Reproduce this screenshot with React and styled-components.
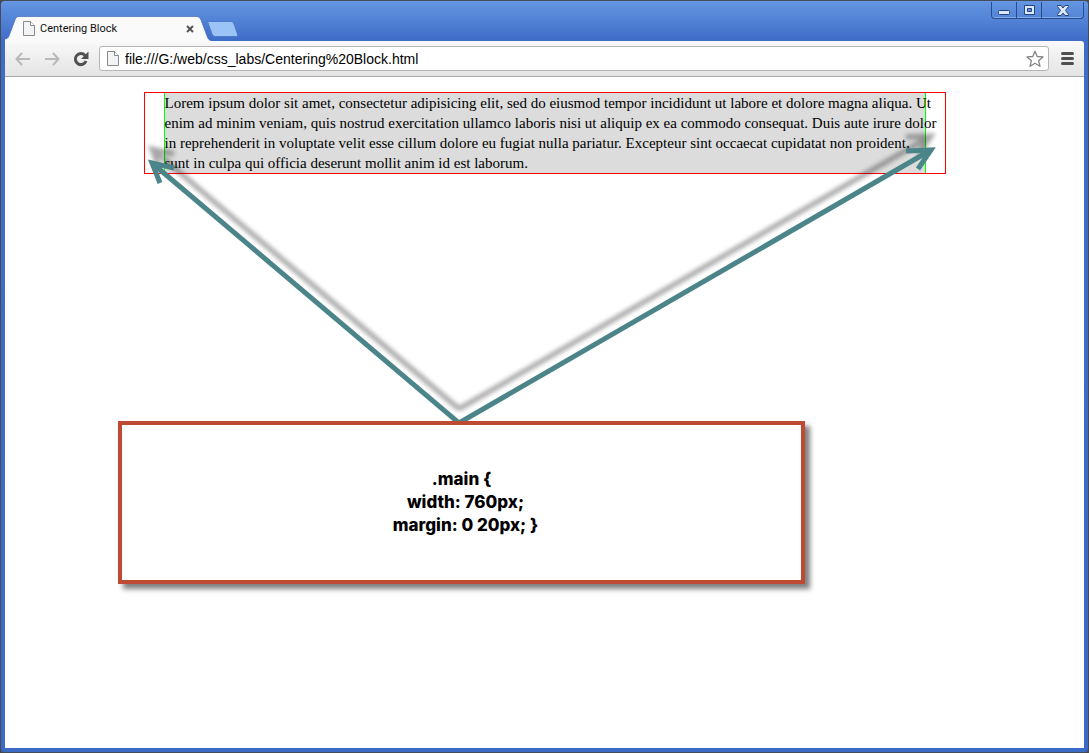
import React from "react";
import styled, { createGlobalStyle } from "styled-components";

const Global = createGlobalStyle`
  *, *::before, *::after { box-sizing: border-box; }
  html, body, #root { height: 100%; }
  body { margin: 0; background: #484848; }
  button { margin: 0; padding: 0; border: 0; background: none; font: inherit; color: inherit; }
`;

const Window = styled.div`
  display: flex;
  flex-direction: column;
  min-height: 100%;
  padding: 1px 4px 4px;
  border: 1px solid #444b59;
  border-radius: 4px;
  background: linear-gradient(#6496e2, #3f6cc8 40px, #3b6bc6);
`;

const TitleBar = styled.header`
  display: flex;
  align-items: flex-end;
  justify-content: space-between;
  height: 39px;
`;

const Tabs = styled.nav`
  display: flex;
  align-items: flex-end;
`;

const Tab = styled.div`
  position: relative;
  display: flex;
  align-items: center;
  gap: 5px;
  width: 202px;
  height: 25px;
  padding: 0 11px 0 18px;
  font: 11px/24px Roboto, "Open Sans", sans-serif;
  color: #111;
`;

const TabShape = styled.svg`
  position: absolute;
  left: 0;
  top: 0;
`;

const TabTitle = styled.span`
  position: relative;
  flex: 1;
  white-space: nowrap;
`;

const IconButton = styled.button`
  position: relative;
  display: flex;
  flex: none;
  align-items: center;
  justify-content: center;
  width: ${(p) => p.$width}px;
  height: ${(p) => p.$height}px;
`;

const PageGlyph = styled.svg`
  position: relative;
  flex: none;
  display: block;
`;

const NewTab = styled.button`
  height: 20px;
`;

const WindowButtons = styled.div`
  display: flex;
  align-self: flex-start;
  height: 17px;
  border: 1px solid #294b90;
  border-top: 0;
  border-radius: 0 0 4px 4px;
  box-shadow: inset 0 -1px #80aae9;
`;

const WindowButton = styled(IconButton)`
  & + & { border-left: 1px solid #294b90; }
`;

const Toolbar = styled.div`
  display: flex;
  align-items: center;
  height: 36px;
  padding: 0 9px 0 8px;
  border-bottom: 1px solid #a9a9a9;
  border-radius: 0 3px 0 0;
  background: linear-gradient(#f9f9f9, #e4e4e4);
`;

const AddressBar = styled.form`
  display: flex;
  flex: 1;
  align-items: center;
  gap: 6px;
  height: 25px;
  min-width: 0;
  margin: 0 10px 0 8px;
  padding: 0 4px 0 7px;
  border: 1px solid #b5b5b5;
  border-radius: 3px;
  background: #fff;
`;

const AddressInput = styled.input`
  flex: 1;
  min-width: 0;
  padding: 0;
  border: 0;
  outline: 0;
  background: none;
  font: 14px/20px "Liberation Sans", Arial, sans-serif;
  color: #000;
`;

const Page = styled.main`
  position: relative;
  flex: 1;
  padding: 15px 0 24px;
  background: #fff;
`;

const Wrapper = styled.div`
  max-width: 802px;
  margin: 0 auto;
  border: 1px solid #f00;
`;

const Main = styled.p`
  max-width: 762px;
  margin: 0 auto;
  border: solid #0f0;
  border-width: 0 1px;
  background: #dcdcdc;
  font: 15px/20px "Liberation Serif", "Times New Roman", serif;
  white-space: nowrap;
  color: #000;
`;

const Arrows = styled.svg`
  position: absolute;
  left: 0;
  top: 0;
  pointer-events: none;
`;

const Callout = styled.pre`
  display: flex;
  flex-direction: column;
  align-items: center;
  justify-content: center;
  max-width: 687px;
  min-height: 163px;
  margin: 247px 24px 0 113px;
  border: 4px solid #bf4a34;
  background: #fff;
  box-shadow: 5px 5px 5px rgba(0, 0, 0, 0.5);
  font: 800 17px/23px Inter, "Arial Black", sans-serif;
  color: #000;
`;

const Declaration = styled.code`
  padding-left: ${(p) => (p.$indent ? 8 : 0)}px;
  font: inherit;
`;

function DocumentIcon() {
  return (
    <PageGlyph width="12" height="15" viewBox="0 0 12 15" aria-hidden="true">
      <path d="M.5 .5h7l4 4v10H.5z" fill="#f1f3f5" stroke="#8b8b8b" />
      <path d="M7.500 .5v4h4" fill="#fff" stroke="#8b8b8b" />
    </PageGlyph>
  );
}

function Arrow({ d, head }) {
  return (
    <g>
      <path d={d} />
      <path d={head} />
    </g>
  );
}

function ArrowPair() {
  return (
    <>
      <Arrow d="M454 346L147 86" head="M169 91L147 86L155 106" />
      <Arrow d="M454 346L926 73" head="M901 74L926 73L913 92" />
    </>
  );
}

export default function App() {
  return (
    <>
      <Global />
      <Window>
        <TitleBar>
          <Tabs aria-label="Tabs">
            <Tab>
              <TabShape width="206" height="25" aria-hidden="true">
                <path
                  d="M0 25V23C2 23 3 22 4 20L10 4C11 1 12 .5 14 .5H191C194 .5 195 2 196 4L202 20C203 23 204 24 206 25Z"
                  fill="#fafafa"
                />
                <path
                  d="M0 23C2 23 3 22 4 20L10 4C11 1 12 .5 14 .5H191C194 .5 195 2 196 4L202 20C203 23 204 24 206 24"
                  fill="none"
                  stroke="#3a61ad"
                  strokeOpacity=".6"
                />
              </TabShape>
              <DocumentIcon />
              <TabTitle>Centering Block</TabTitle>
              <IconButton type="button" aria-label="Close tab" $width={12} $height={14}>
                <svg width="8" height="8" viewBox="0 0 8 8">
                  <path d="M1 1l6 6M7 1l-6 6" stroke="#555" strokeWidth="2" />
                </svg>
              </IconButton>
            </Tab>
            <NewTab type="button" aria-label="New tab">
              <svg width="32" height="16" viewBox="0 0 32 16">
                <path
                  d="M1.500 .5H24C26 .5 26 1 27 3L30.500 13C31 15 30 15.500 29 15.500H9C7 15.500 6 15 5 13L1 2C.7 1 .8 .5 1.500 .5Z"
                  fill="#9cc3f5"
                  stroke="#4b7acb"
                />
              </svg>
            </NewTab>
          </Tabs>
          <WindowButtons>
            <WindowButton type="button" aria-label="Minimize" $width={24} $height={16}>
              <svg width="12" height="10" viewBox="0 0 12 10">
                <rect x=".5" y="5.500" width="11" height="4" rx="1" fill="#dbe8fb" stroke="#24447f" />
              </svg>
            </WindowButton>
            <WindowButton type="button" aria-label="Maximize" $width={25} $height={16}>
              <svg width="11" height="10" viewBox="0 0 11 10">
                <path
                  fillRule="evenodd"
                  d="M.5 .5h10v9H.5zM3.500 3.500v3h4v-3z"
                  fill="#dbe8fb"
                  stroke="#24447f"
                />
              </svg>
            </WindowButton>
            <WindowButton type="button" aria-label="Close" $width={42} $height={16}>
              <svg width="12" height="11" viewBox="0 0 12 11">
                <path
                  d="M.5 .5h3.500l2 2.500 2-2.500h3.500v1l-3 4 3 4v1H8L6 8l-2 2.500H.5v-1l3-4-3-4z"
                  fill="#dbe8fb"
                  stroke="#24447f"
                />
              </svg>
            </WindowButton>
          </WindowButtons>
        </TitleBar>
        <Toolbar>
          <IconButton type="button" aria-label="Back" $width={20} $height={24}>
            <svg width="16" height="14" viewBox="0 0 16 14">
              <path d="M15 7H2M7 1L1.500 7L7 13" fill="none" stroke="#b9b9b9" strokeWidth="2" />
            </svg>
          </IconButton>
          <IconButton type="button" aria-label="Forward" $width={38} $height={24}>
            <svg width="16" height="14" viewBox="0 0 16 14">
              <path d="M1 7h13M9 1l5.500 6L9 13" fill="none" stroke="#b9b9b9" strokeWidth="2" />
            </svg>
          </IconButton>
          <IconButton type="button" aria-label="Reload" $width={20} $height={24}>
            <svg width="16" height="16" viewBox="0 0 16 16">
              <path d="M12 4.500A5.500 5.500 0 1 0 13 10" fill="none" stroke="#505050" strokeWidth="3" />
              <path d="M15.500 .5V8H8z" fill="#505050" />
            </svg>
          </IconButton>
          <AddressBar onSubmit={(e) => e.preventDefault()}>
            <DocumentIcon />
            <AddressInput
              aria-label="Address"
              defaultValue="file:///G:/web/css_labs/Centering%20Block.html"
            />
            <IconButton type="button" aria-label="Bookmark this page" $width={18} $height={20}>
              <svg width="18" height="18" viewBox="0 0 18 18">
                <path
                  d="M9 1.200l2.200 5.300 5.800.4-4.400 3.800 1.400 5.600L9 13.300l-5 3 1.400-5.600L1 6.900l5.800-.4z"
                  fill="#fff"
                  stroke="#858585"
                  strokeWidth="1.300"
                  strokeLinejoin="round"
                />
              </svg>
            </IconButton>
          </AddressBar>
          <IconButton type="button" aria-label="Menu" $width={16} $height={24}>
            <svg width="13" height="13" viewBox="0 0 13 13">
              <path d="M1.500 1.500h10M1.500 6.500h10M1.500 11.500h10" stroke="#505050" strokeWidth="3" strokeLinecap="round" />
            </svg>
          </IconButton>
        </Toolbar>
        <Page>
          <Wrapper>
            <Main>
              Lorem ipsum dolor sit amet, consectetur adipisicing elit, sed do eiusmod tempor incididunt ut
              labore et dolore magna aliqua. Ut
              <br />
              enim ad minim veniam, quis nostrud exercitation ullamco laboris nisi ut aliquip ex ea commodo
              consequat. Duis aute irure dolor
              <br />
              in reprehenderit in voluptate velit esse cillum dolore eu fugiat nulla pariatur. Excepteur sint
              occaecat cupidatat non proident,
              <br />
              sunt in culpa qui officia deserunt mollit anim id est laborum.
            </Main>
          </Wrapper>
          <Callout>
            <Declaration>{".main {"}</Declaration>
            <Declaration $indent>width: 760px;</Declaration>
            <Declaration $indent>{"margin: 0 20px; }"}</Declaration>
          </Callout>
          <Arrows width="960" height="344" viewBox="0 0 960 344" aria-hidden="true">
            <defs>
              <filter id="soft" x="-10%" y="-10%" width="120%" height="120%">
                <feGaussianBlur stdDeviation="2" />
              </filter>
            </defs>
            <g
              transform="translate(0 -14)"
              fill="none"
              stroke="#000"
              strokeWidth="5"
              opacity=".34"
              filter="url(#soft)"
            >
              <ArrowPair />
            </g>
            <g fill="none" stroke="#4c8589" strokeWidth="5">
              <ArrowPair />
            </g>
          </Arrows>
        </Page>
      </Window>
    </>
  );
}
